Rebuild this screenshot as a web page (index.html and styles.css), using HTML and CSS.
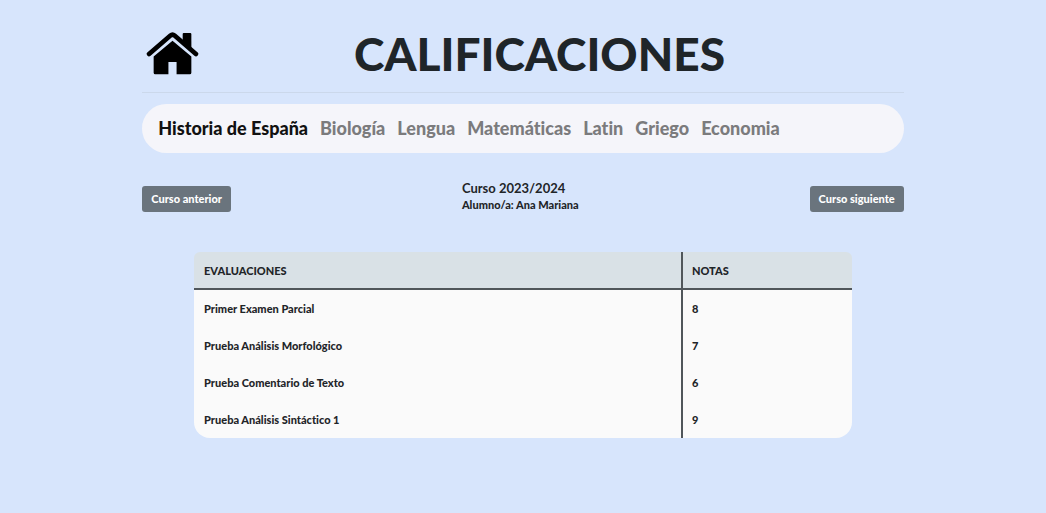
FILE: index.html
```html
<!DOCTYPE html>
<html lang="es">
<head>
<meta charset="utf-8">
<meta name="viewport" content="width=device-width, initial-scale=1">
<title>Calificaciones</title>
<link rel="stylesheet" href="styles.css">
</head>
<body>
<div class="container">
  <header class="header">
    <a class="home" href="#" aria-label="Inicio">
      <svg viewBox="0 0 52 43" aria-hidden="true">
        <path d="M3 21.500L24 3.500Q26 1.800 28 3.500L49 21.500" fill="none" stroke="#000" stroke-width="4.600" stroke-linecap="round" stroke-linejoin="round"/>
        <path d="M36 9V2Q36 1 37 1H43.500Q44.500 1 44.500 2V16.500Z"/>
        <path d="M7.500 24L26 8.500L44.500 24V40Q44.500 41.500 43 41.500H30V29.500H22V41.500H9Q7.500 41.500 7.500 40Z"/>
      </svg>
    </a>
    <h1 class="title">CALIFICACIONES</h1>
  </header>

  <nav class="subjects" aria-label="Asignaturas">
    <a class="subject active" href="#" aria-current="page">Historia de España</a>
    <a class="subject" href="#">Biología</a>
    <a class="subject" href="#">Lengua</a>
    <a class="subject" href="#">Matemáticas</a>
    <a class="subject" href="#">Latin</a>
    <a class="subject" href="#">Griego</a>
    <a class="subject" href="#">Economia</a>
  </nav>

  <section class="course">
    <button class="btn" type="button">Curso anterior</button>
    <div class="course-info">
      <h2 class="course-year">Curso 2023/2024</h2>
      <p class="student">Alumno/a: Ana Mariana</p>
    </div>
    <button class="btn" type="button">Curso siguiente</button>
  </section>

  <table class="grades">
    <thead>
      <tr><th scope="col">EVALUACIONES</th><th class="mark" scope="col">NOTAS</th></tr>
    </thead>
    <tbody>
      <tr><td>Primer Examen Parcial</td><td class="mark">8</td></tr>
      <tr><td>Prueba Análisis Morfológico</td><td class="mark">7</td></tr>
      <tr><td>Prueba Comentario de Texto</td><td class="mark">6</td></tr>
      <tr><td>Prueba Análisis Sintáctico 1</td><td class="mark">9</td></tr>
    </tbody>
  </table>
</div>
</body>
</html>
```

FILE: styles.css
```css
* {
  box-sizing: border-box;
}

body {
  margin: 0;
  background: #d7e5fc;
  color: #1f2529;
  font-family: Lato, "Open Sans", sans-serif;
  font-weight: 900;
  font-variant-ligatures: none;
}

.container {
  width: 72.8%;
  max-width: 1140px;
  margin: 0 auto;
}

.header {
  display: flex;
  align-items: center;
  padding: 16px 24px 0 4px;
  height: 93px;
  border-bottom: 1px solid #cbd8eb;
}

.home {
  flex: none;
  width: 53px;
  color: #000;
}

.home svg {
  display: block;
  width: 100%;
}

.title {
  flex: 1;
  margin: 0;
  font-size: 46px;
  font-weight: 900;
  line-height: 56px;
  text-align: center;
}

.subjects {
  display: flex;
  flex-wrap: wrap;
  gap: 12px;
  margin-top: 11px;
  padding: 12px 16px 13px;
  border-radius: 25px;
  background: #f5f5fa;
}

.subject {
  color: #7b7b7d;
  font-size: 18px;
  line-height: 24px;
  text-decoration: none;
}

.subject.active {
  color: #111;
}

.course {
  display: flex;
  align-items: center;
  justify-content: space-between;
  margin-top: 26px;
}

.btn {
  margin-top: 5px;
  padding: 5px 9px;
  border: 0;
  border-radius: 3px;
  background: #6a747d;
  color: #fff;
  font: inherit;
  font-size: 11px;
  line-height: 16px;
}

.course-year,
.student {
  margin: 0;
}

.course-year {
  font-size: 13px;
  line-height: 18px;
}

.student {
  font-size: 11px;
  line-height: 16px;
}

.grades {
  width: 86.4%;
  margin: 39px auto 0;
  border-collapse: separate;
  border-spacing: 0;
  border-radius: 16px;
  background: #fafafa;
  table-layout: fixed;
  font-size: 11px;
  line-height: 16px;
  text-align: left;
}

.grades th,
.grades td {
  padding: 11px 10px 10px;
}

.grades th {
  padding-bottom: 9px;
  border-bottom: 2px solid #50565a;
  background: #d9e1e6;
  font-weight: 900;
}

.grades th:first-child {
  border-top-left-radius: 6px;
}

.grades th:last-child {
  border-top-right-radius: 6px;
}

.grades .mark {
  width: 26%;
  padding-left: 9px;
  border-left: 2px solid #50565a;
}
```
